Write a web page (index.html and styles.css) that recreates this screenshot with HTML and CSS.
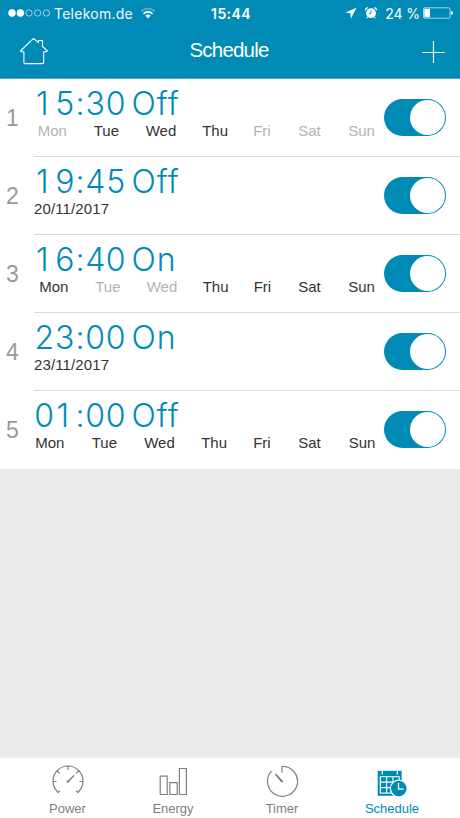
FILE: index.html
```html
<!DOCTYPE html>
<html lang="en">
<head>
<meta charset="utf-8">
<title>Schedule</title>
<link rel="stylesheet" href="styles.css">
</head>
<body>
<div class="app">
  <header class="header">
    <div class="status">
      <div class="status-left">
        <svg class="signal" width="43" height="10" viewBox="0 0 43 10" fill="none" stroke="#fff" stroke-width=".8"><circle cx="4" cy="5" r="3.4" fill="#fff"/><circle cx="12.4" cy="5" r="3.4" fill="#fff"/><g opacity=".75"><circle cx="21" cy="5" r="3.2"/><circle cx="29.7" cy="5" r="3.2"/><circle cx="38.4" cy="5" r="3.2"/></g></svg>
        <span class="carrier">Telekom.de</span>
        <svg class="wifi" width="16" height="12" viewBox="0 0 16 12" fill="none" stroke="#fff" stroke-width="1.8"><path d="M1.2 4.3a9.8 9.8 0 0 1 13.6 0" opacity=".35"/><path d="M3.5 6.8a6.4 6.4 0 0 1 9 0"/><path d="M8 11.4 5.4 8.8a3.8 3.8 0 0 1 5.2 0z" fill="#fff" stroke="none"/></svg>
      </div>
      <span class="clock">15:44</span>
      <div class="status-right">
        <svg class="location" width="12" height="12" viewBox="0 0 12 12" fill="#fff"><path d="M11.5.7.5 5.6l4.9.9.6 5z"/></svg>
        <svg class="alarm" width="12" height="12" viewBox="0 0 12 12"><circle cx="6" cy="6.2" r="4.9" fill="#fff"/><path d="M.5 3.2Q.5 1 2.8.6M9.2.6q2.3.4 2.3 2.6" fill="none" stroke="#fff" stroke-width="1.2"/><path d="M2.6 10l-1 1.3M9.4 10l1 1.3" stroke="#fff"/><path d="M6 3.2v3.2H3.9" fill="none" stroke="#008bb7" stroke-width=".9"/></svg>
        <span class="percent">24 %</span>
        <svg class="battery" width="31" height="12" viewBox="0 0 31 12"><rect x=".5" y=".8" width="26.5" height="10.4" rx="1.3" fill="none" stroke="#fff" stroke-opacity=".8" stroke-width=".8"/><path d="M1.3 1.7h5.7v8.6H1.3z" fill="#fff"/><path d="M28 4q2 .3 2 2t-2 2z" fill="#fff"/></svg>
      </div>
    </div>
    <div class="nav">
      <svg class="home" width="30" height="28" viewBox="0 0 30 28" fill="none" stroke="#fff" stroke-width="1.1" stroke-linejoin="round"><path d="M1.5 14 14.5 1.3l5 4.3V3.5h4v6l4.9 4.3-.8.9h-2.9v10.6q0 1.3-1.3 1.3H6.2q-1.3 0-1.3-1.3V14.7H2.2z"/></svg>
      <h1 class="title">Schedule</h1>
      <svg class="add" width="24" height="24" viewBox="0 0 24 24" stroke="#fff" stroke-width="1.2"><path d="M12.5 1v22M1.5 12.5h22"/></svg>
    </div>
  </header>

  <main class="list">
    <section class="row">
      <span class="index">1</span>
      <div class="body">
        <div class="headline"><span class="time"><b class="one">1</b><b>5</b><b>:</b><b>3</b><b>0</b></span><span class="state">Off</span></div>
        <div class="days days-a"><span class="off">Mon</span><span>Tue</span><span>Wed</span><span>Thu</span><span class="off">Fri</span><span class="off">Sat</span><span class="off">Sun</span></div>
      </div>
      <span class="switch"><span class="knob"></span></span>
    </section>
    <section class="row">
      <span class="index">2</span>
      <div class="body">
        <div class="headline"><span class="time"><b class="one">1</b><b>9</b><b>:</b><b>4</b><b>5</b></span><span class="state">Off</span></div>
        <div class="date">20/11/2017</div>
      </div>
      <span class="switch"><span class="knob"></span></span>
    </section>
    <section class="row">
      <span class="index">3</span>
      <div class="body">
        <div class="headline"><span class="time"><b class="one">1</b><b>6</b><b>:</b><b>4</b><b>0</b></span><span class="state">On</span></div>
        <div class="days days-b"><span>Mon</span><span class="off">Tue</span><span class="off">Wed</span><span>Thu</span><span>Fri</span><span>Sat</span><span>Sun</span></div>
      </div>
      <span class="switch"><span class="knob"></span></span>
    </section>
    <section class="row">
      <span class="index">4</span>
      <div class="body">
        <div class="headline"><span class="time"><b>2</b><b>3</b><b>:</b><b>0</b><b>0</b></span><span class="state">On</span></div>
        <div class="date">23/11/2017</div>
      </div>
      <span class="switch"><span class="knob"></span></span>
    </section>
    <section class="row">
      <span class="index">5</span>
      <div class="body">
        <div class="headline"><span class="time"><b>0</b><b class="one">1</b><b>:</b><b>0</b><b>0</b></span><span class="state">Off</span></div>
        <div class="days days-c"><span>Mon</span><span>Tue</span><span>Wed</span><span>Thu</span><span>Fri</span><span>Sat</span><span>Sun</span></div>
      </div>
      <span class="switch"><span class="knob"></span></span>
    </section>
  </main>

  <nav class="tabs">
    <div class="tab">
      <svg width="34" height="34" viewBox="0 0 34 34" fill="none" stroke="#808080" stroke-width="1.2"><path d="M6.8 28A15 15 0 1 1 27.2 28M8.9 26.6 6.4 29M25.1 26.6l2.5 2.4M2 17.5h3.5M28.5 17.5H32M17 2v4M6.4 6.9l2.4 2.4M27.6 6.9l-2.4 2.4"/><path d="m17 17.5 6-6" stroke-width="1.4"/><circle cx="17" cy="17.5" r="1.3" fill="#808080" stroke="none"/></svg>
      <span>Power</span>
    </div>
    <div class="tab">
      <svg width="34" height="34" viewBox="0 0 34 34" fill="none" stroke="#808080" stroke-width="1.2"><path d="M4.2 12.2h7v18.3h-7zM13.8 18.7h7.4v11.8h-7.4zM23.4 4.5h7v26h-7z"/></svg>
      <span>Energy</span>
    </div>
    <div class="tab">
      <svg width="34" height="34" viewBox="0 0 34 34" fill="none" stroke="#808080" stroke-width="1.2"><path d="M17 8.8V2.3A15 15 0 1 1 6.7 6.9"/><path d="m9.8 10.2 1.2-.6 6.7 7.1q.6 1-.2 1.5t-1.5-.3z" fill="#777" stroke="none"/></svg>
      <span>Timer</span>
    </div>
    <div class="tab active">
      <svg width="34" height="34" viewBox="0 0 34 34"><path fill="#008bb7" d="M2.7 6.8h24v25h-24z"/><path fill="#fff" d="M4.7 12.2h20v17.4h-20z"/><path stroke="#fff" stroke-width="1.3" d="M7.3 6v4.5M22.3 6v4.5"/><path fill="#008bb7" d="M5.9 13.2h5.2v4.4H5.9zM12.2 13.2h5.2v4.4h-5.2zM18.5 13.2h5.2v4.4h-5.2zM5.9 18.7h5.2v4.4H5.9zM12.2 18.7h5.2v4.4h-5.2zM5.9 24.2h5.2v4.4H5.9zM12.2 24.2h5.2v4.4h-5.2z"/><circle cx="23.8" cy="24.6" r="8.4" fill="#008bb7" stroke="#fff" stroke-width="1.2"/><path d="M23.5 19v6.2h5.3" fill="none" stroke="#fff" stroke-width="1.2"/></svg>
      <span>Schedule</span>
    </div>
  </nav>
</div>
</body>
</html>
```

FILE: styles.css
```css
* { box-sizing: border-box; }
body { margin: 0; font-family: "Liberation Sans", Arial, sans-serif; }
svg { display: block; flex: none; }
.app { width: 460px; height: 818px; display: flex; flex-direction: column; background: #ebebeb; overflow: hidden; }

.header { height: 79px; flex: none; background: #008bb7; color: #fff; border-bottom: 1px solid #55aac7; }
.status { height: 26px; display: grid; grid-template-columns: 1fr auto 1fr; align-items: center; font-family: Inter, sans-serif; }
.status-left, .status-right { display: flex; align-items: center; }
.status-left { padding-left: 8px; }
.status-right { justify-content: flex-end; padding-right: 6px; }
.carrier { margin-left: 3px; font-size: 14px; letter-spacing: .25px; opacity: .95; }
.wifi { margin-left: 7px; }
.clock { font-size: 14px; font-weight: 600; letter-spacing: .4px; transform: translateX(1px); }
.location { margin-right: 1px; }
.alarm { margin-left: 7px; }
.percent { margin-left: 8px; font-size: 14px; letter-spacing: -.1px; white-space: nowrap; }
.battery { margin-left: 3px; }
.nav { height: 52px; display: grid; grid-template-columns: 1fr auto 1fr; align-items: center; padding: 0 15px 0 19px; }
.home { margin-top: -3px; }
.title { margin: 0; font-size: 20.5px; line-height: 24px; font-weight: 400; letter-spacing: -.8px; transform: translate(-3px, -2px); }
.add { justify-self: end; }

.list { background: #fff; flex: none; }
.row { height: 78px; display: flex; position: relative; }
.row:not(:last-child) .body { border-bottom: 1px solid #d9d9d9; }
.index { width: 34px; flex: none; padding-left: 6px; font-size: 23px; line-height: 78px; color: #999; }
.body { flex: 1; height: 78px; }
.headline { display: flex; height: 43px; padding-top: 5px; font-family: Inter, sans-serif; font-weight: 300; font-size: 32px; line-height: 40px; color: #008bb7; }
.time { width: 97.5px; display: grid; grid-template-columns: 20.5px 20.5px 10px 20.5px 20.5px; justify-items: center; }
.time b { font-weight: inherit; }
.time .one { padding-right: 4px; }
.state { letter-spacing: .9px; }
.days { display: grid; font-size: 15px; line-height: 18px; color: #333; }
.days .off { color: #b3b3b3; }
.days-a { padding-left: 3.7px; grid-template-columns: 56px 52px 56.5px 51px 45px 50px 32px; }
.days-b { padding-left: 5.2px; grid-template-columns: 56px 51.5px 56px 51px 44.5px 50px 32px; }
.days-c { padding-left: 1.2px; grid-template-columns: 56.5px 52.5px 57px 52px 45px 50.5px 32px; }
.date { font-size: 15px; letter-spacing: .12px; line-height: 18px; color: #333; }
.switch { position: absolute; right: 14px; top: 20px; width: 62px; height: 37px; padding: 1px; border-radius: 19px; background: #008bb7; display: flex; justify-content: flex-end; }
.knob { width: 35px; height: 35px; border-radius: 50%; background: #fff; }

.tabs { margin-top: auto; height: 60px; flex: none; background: #fff; display: grid; grid-template-columns: 121px 90px 128px 92px; padding-left: 7px; }
.tab { display: flex; flex-direction: column; align-items: center; padding-top: 6px; font-size: 13px; line-height: 16px; color: #808080; }
.tab span { margin-top: 3px; }
.tab.active { color: #008bb7; }
```
